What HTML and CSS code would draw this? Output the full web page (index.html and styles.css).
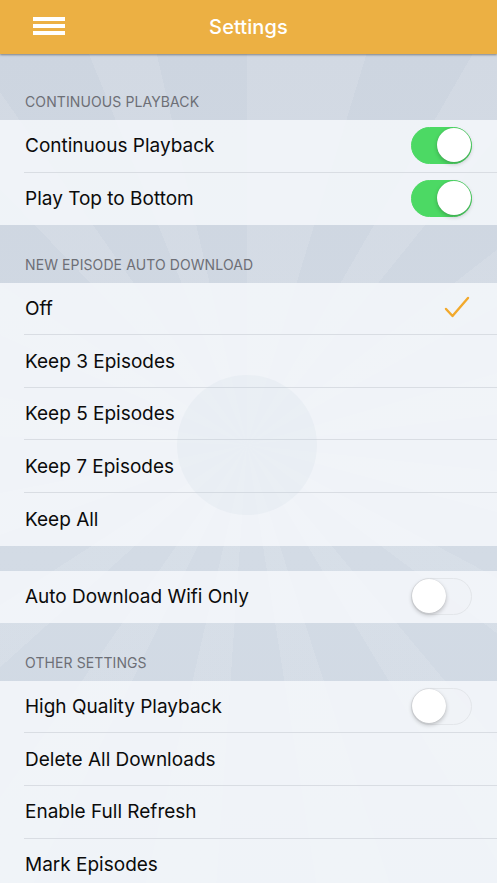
FILE: index.html
```html
<!DOCTYPE html>
<html lang="en">
<head>
    <meta charset="UTF-8">
    <meta name="viewport" content="width=device-width, initial-scale=1.0">
    <title>Settings</title>
    <link rel="stylesheet" href="styles.css">
</head>
<body>
    <header class="navbar">
        <div class="menu-btn">
            <span></span>
            <span></span>
            <span></span>
        </div>
        <h1>Settings</h1>
    </header>

    <main class="content">
        <div class="rays"></div>
        <div class="disc"></div>

        <div class="section-title first">CONTINUOUS PLAYBACK</div>
        <ul class="group">
            <li class="row">
                <span>Continuous Playback</span>
                <span class="switch on"></span>
            </li>
            <li class="row">
                <span>Play Top to Bottom</span>
                <span class="switch on"></span>
            </li>
        </ul>

        <div class="section-title">NEW EPISODE AUTO DOWNLOAD</div>
        <ul class="group">
            <li class="row">
                <span>Off</span>
                <svg class="check" width="26" height="22" viewBox="0 0 26 22">
                    <path d="M2 13 L8.5 20 L24 2" fill="none" stroke="#f2a92c" stroke-width="2.4" stroke-linecap="round" stroke-linejoin="round"/>
                </svg>
            </li>
            <li class="row"><span>Keep 3 Episodes</span></li>
            <li class="row"><span>Keep 5 Episodes</span></li>
            <li class="row"><span>Keep 7 Episodes</span></li>
            <li class="row"><span>Keep All</span></li>
        </ul>

        <div class="spacer"></div>
        <ul class="group">
            <li class="row">
                <span>Auto Download Wifi Only</span>
                <span class="switch"></span>
            </li>
        </ul>

        <div class="section-title">OTHER SETTINGS</div>
        <ul class="group">
            <li class="row">
                <span>High Quality Playback</span>
                <span class="switch"></span>
            </li>
            <li class="row"><span>Delete All Downloads</span></li>
            <li class="row"><span>Enable Full Refresh</span></li>
            <li class="row"><span>Mark Episodes</span></li>
        </ul>
    </main>
</body>
</html>
```

FILE: styles.css
```css
* {
    box-sizing: border-box;
}
html, body {
    height: 100%;
}
body {
    margin: 0;
    padding: 0;
    font-family: 'Inter', 'Roboto', sans-serif;
    background-color: #cfd8e3;
    overflow: hidden;
}

/* top bar */
.navbar {
    position: relative;
    z-index: 3;
    height: 54px;
    background-color: #ecb043;
    box-shadow: 0 1px 2px rgba(60, 60, 60, 0.55);
    display: flex;
    align-items: center;
    justify-content: center;
}
.navbar h1 {
    margin: 0;
    color: #ffffff;
    font-size: 20px;
    font-weight: 500;
    letter-spacing: 0.1px;
}
.menu-btn {
    position: absolute;
    left: 33px;
    top: 17px;
    width: 32px;
    display: flex;
    flex-direction: column;
    gap: 3px;
}
.menu-btn span {
    display: block;
    height: 4px;
    background-color: #ffffff;
}

/* list area */
.content {
    position: relative;
    min-height: 829px;
    overflow: hidden;
    background: linear-gradient(180deg, #cdd5e0 0%, #d3dbe5 60%, #cfd8e3 100%);
}
.rays {
    position: absolute;
    left: -353px;
    top: -209px;
    width: 1200px;
    height: 1200px;
    pointer-events: none;
    background: repeating-conic-gradient(from 8deg, rgba(255, 255, 255, 0.1) 0deg 9deg, rgba(255, 255, 255, 0) 9deg 22deg);
}
.disc {
    position: absolute;
    z-index: 2;
    left: 177px;
    top: 321px;
    width: 140px;
    height: 140px;
    border-radius: 50%;
    pointer-events: none;
    background-color: rgba(190, 202, 222, 0.12);
}

.section-title {
    position: relative;
    height: 57.5px;
    padding: 0 0 10px 25px;
    display: flex;
    align-items: flex-end;
    color: #6d6f76;
    font-size: 14px;
    letter-spacing: 0.1px;
}
.section-title.first {
    height: 66px;
}
.spacer {
    height: 25px;
}

.group {
    position: relative;
    list-style: none;
    margin: 0;
    padding: 0;
    background-color: rgba(246, 248, 251, 0.84);
}
.row {
    height: 52.6px;
    margin-left: 24px;
    padding-right: 25px;
    display: flex;
    align-items: center;
    justify-content: space-between;
    color: #0b0b0b;
    font-size: 19px;
    border-bottom: 1px solid #d9dde3;
}
.row span:first-child {
    padding-left: 1px;
}
.row:last-child {
    border-bottom: none;
}
.check {
    margin-right: 2px;
    margin-bottom: 3px;
}

/* toggle switch */
.switch {
    position: relative;
    width: 61px;
    height: 37px;
    border-radius: 19px;
    border: 1.5px solid #e3e6ea;
    background-color: rgba(240, 242, 246, 0.6);
}
.switch::after {
    content: "";
    position: absolute;
    top: 0;
    left: 0;
    width: 34px;
    height: 34px;
    border-radius: 50%;
    background-color: #ffffff;
    box-shadow: 0 2px 4px rgba(0, 0, 0, 0.22), 0 0 1px rgba(0, 0, 0, 0.15);
}
.switch.on {
    background-color: #4cd964;
    border-color: #4cd964;
}
.switch.on::after {
    left: auto;
    right: 0;
}
```
